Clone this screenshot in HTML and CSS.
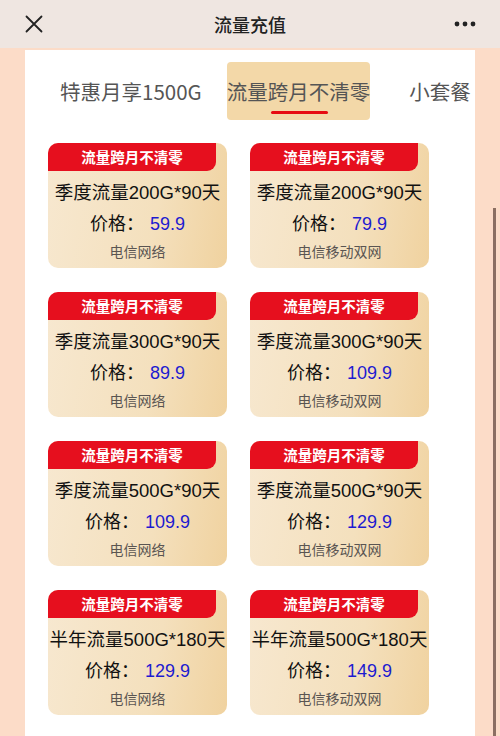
FILE: index.html
```html
<!DOCTYPE html>
<html lang="zh">
<head>
<meta charset="utf-8">
<title>流量充值</title>
<link rel="stylesheet" href="styles.css">
</head>
<body>
<header class="topbar">
  <svg class="icon-close" width="18" height="18" viewBox="0 0 18 18"><path d="M1.5 1.5 L16.5 16.5 M16.5 1.5 L1.5 16.5" stroke="#222" stroke-width="1.8" fill="none" stroke-linecap="round"/></svg>
  <div class="title">流量充值</div>
  <svg class="icon-more" width="22" height="6" viewBox="0 0 22 6"><circle cx="3" cy="3" r="2.4" fill="#222"/><circle cx="11" cy="3" r="2.4" fill="#222"/><circle cx="19" cy="3" r="2.4" fill="#222"/></svg>
</header>
<main class="panel">
  <nav class="tabs">
    <div class="tab tab-first">特惠月享1500G</div>
    <div class="tab tab-active">流量跨月不清零<span class="underline"></span></div>
    <div class="tab tab-last">小套餐</div>
  </nav>
  <section class="grid">
    <div class="card"><div class="banner">流量跨月不清零</div><div class="name">季度流量200G*90天</div><div class="price">价格：<span class="num">59.9</span></div><div class="net">电信网络</div></div>
    <div class="card"><div class="banner">流量跨月不清零</div><div class="name">季度流量200G*90天</div><div class="price">价格：<span class="num">79.9</span></div><div class="net">电信移动双网</div></div>
    <div class="card"><div class="banner">流量跨月不清零</div><div class="name">季度流量300G*90天</div><div class="price">价格：<span class="num">89.9</span></div><div class="net">电信网络</div></div>
    <div class="card"><div class="banner">流量跨月不清零</div><div class="name">季度流量300G*90天</div><div class="price">价格：<span class="num">109.9</span></div><div class="net">电信移动双网</div></div>
    <div class="card"><div class="banner">流量跨月不清零</div><div class="name">季度流量500G*90天</div><div class="price">价格：<span class="num">109.9</span></div><div class="net">电信网络</div></div>
    <div class="card"><div class="banner">流量跨月不清零</div><div class="name">季度流量500G*90天</div><div class="price">价格：<span class="num">129.9</span></div><div class="net">电信移动双网</div></div>
    <div class="card"><div class="banner">流量跨月不清零</div><div class="name">半年流量500G*180天</div><div class="price">价格：<span class="num">129.9</span></div><div class="net">电信网络</div></div>
    <div class="card"><div class="banner">流量跨月不清零</div><div class="name">半年流量500G*180天</div><div class="price">价格：<span class="num">149.9</span></div><div class="net">电信移动双网</div></div>
  </section>
</main>
<div class="scrollbar"></div>
</body>
</html>
```
FILE: styles.css
```css
html, body {
  margin: 0;
  padding: 0;
  height: 736px;
  overflow: hidden;
}
body {
  background: #fcdcc8;
  font-family: "Liberation Sans", "Noto Sans CJK SC", sans-serif;
  position: relative;
}
.topbar {
  height: 48px;
  background: #efe6e1;
  display: flex;
  align-items: center;
  justify-content: space-between;
  padding: 0 24px 0 24px;
  box-sizing: border-box;
  position: relative;
}
.icon-close { margin-left: 1px; }
.title {
  position: absolute;
  left: 0;
  right: 0;
  text-align: center;
  font-family: "Noto Sans CJK SC", sans-serif;
  font-size: 18px;
  font-weight: 500;
  color: #222;
  line-height: 48px;
  pointer-events: none;
}
.panel {
  margin: 2px 25px 0 25px;
  background: #fff;
  height: 700px;
}
.tabs {
  display: flex;
  align-items: flex-start;
  height: 93px;
  padding-left: 35px;
  padding-top: 12px;
  box-sizing: border-box;
  white-space: nowrap;
  overflow: hidden;
}
.tab {
  font-family: "Noto Sans CJK SC", sans-serif;
  font-size: 20.5px;
  color: #555;
  line-height: 58px;
  height: 58px;
}
.tab-first { margin-right: 25px; }
.tab-active {
  background: #f3d8a8;
  border-radius: 4px;
  position: relative;
  margin-right: 39px;
}
.underline {
  position: absolute;
  left: 44px;
  width: 57px;
  bottom: 6px;
  height: 3px;
  border-radius: 2px;
  background: #e60b12;
}
.grid {
  display: grid;
  grid-template-columns: 179px 179px;
  column-gap: 23px;
  row-gap: 24px;
  padding-left: 23px;
}
.card {
  height: 125px;
  border-radius: 10px;
  overflow: hidden;
  background: linear-gradient(100deg, #f7e8d0 0%, #f4e0bd 60%, #f0d29f 100%);
  display: flex;
  flex-direction: column;
  align-items: center;
}
.banner {
  align-self: flex-start;
  width: 168px;
  height: 28px;
  background: #e60f1e;
  border-bottom-right-radius: 9px;
  color: #fff;
  font-family: "Noto Sans CJK SC", sans-serif;
  font-weight: 700;
  font-size: 14.5px;
  line-height: 28px;
  text-align: center;
}
.name {
  margin-top: 9px;
  font-size: 18.5px;
  line-height: 26px;
  color: #111;
  white-space: nowrap;
}
.price {
  margin-top: 5px;
  font-size: 18px;
  line-height: 26px;
  color: #111;
}
.num {
  color: #1d1ad0;
  margin-left: 6px;
}
.net {
  margin-top: 5px;
  font-size: 14px;
  line-height: 20px;
  color: #5a5552;
}
.scrollbar {
  position: absolute;
  left: 493px;
  top: 208px;
  width: 3px;
  height: 540px;
  background: #8b6f62;
}
```
